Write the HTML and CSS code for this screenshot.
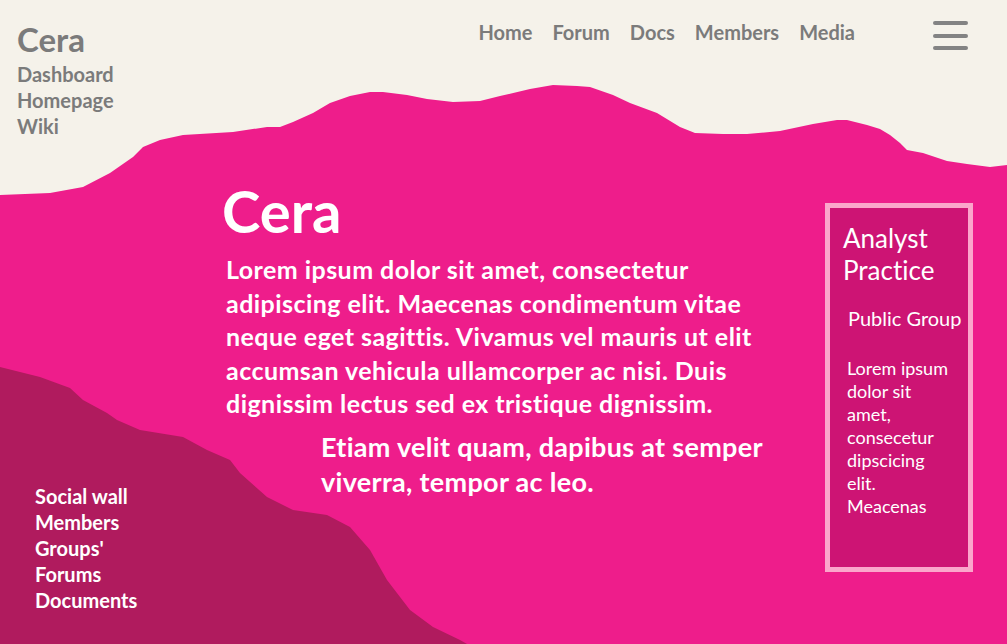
FILE: index.html
```html
<!DOCTYPE html>
<html lang="en">
<head>
<meta charset="utf-8">
<title>Cera</title>
<link rel="stylesheet" href="styles.css">
</head>
<body>
<div class="page">
  <svg class="bg" viewBox="0 0 1007 644" preserveAspectRatio="none" aria-hidden="true">
    <path class="wave" d="M0,195 L50,193 L83,187 L110,173 L133,157 L143,147 L160,140 L183,135 L233,132 L267,127 L280,127 L293,122 L313,113 L330,103 L350,96 L370,92 L383,92 L407,95 L427,99 L453,102 L480,101 L500,96 L530,89 L553,85 L577,86 L590,87 L613,95 L630,103 L657,113 L680,127 L695,133 L723,134 L747,134 L780,131 L813,124 L837,120 L847,120 L867,125 L880,129 L890,135 L900,143 L907,150 L923,153 L947,161 L967,164 L990,167 L1007,165 L1007,644 L0,644 Z"/>
    <path class="hill" d="M0,367 L40,377 L70,388 L83,400 L107,413 L117,420 L140,430 L183,437 L207,450 L230,460 L240,473 L267,497 L293,510 L327,515 L350,527 L370,550 L387,580 L410,610 L433,627 L460,640 L467,644 L0,644 Z"/>
  </svg>

  <header class="header">
    <div class="brand">
      <div class="brand-name">Cera</div>
      <ul class="brand-links">
        <li>Dashboard</li>
        <li>Homepage</li>
        <li>Wiki</li>
      </ul>
    </div>
    <nav class="topnav">
      <a>Home</a>
      <a>Forum</a>
      <a>Docs</a>
      <a>Members</a>
      <a>Media</a>
    </nav>
    <div class="burger" aria-label="Menu">
      <span></span><span></span><span></span>
    </div>
  </header>

  <main class="main">
    <ul class="sidenav">
      <li>Social wall</li>
      <li>Members</li>
      <li>Groups'</li>
      <li>Forums</li>
      <li>Documents</li>
    </ul>

    <section class="content">
      <h1 class="title">Cera</h1>
      <p class="lead">Lorem ipsum dolor sit amet, consectetur adipiscing elit. Maecenas condimentum vitae neque eget sagittis. Vivamus vel mauris ut elit accumsan vehicula ullamcorper ac nisi. Duis dignissim lectus sed ex tristique dignissim.</p>
      <p class="sub">Etiam velit quam, dapibus at semper viverra, tempor ac leo.</p>
    </section>

    <aside class="card">
      <h2 class="card-title">Analyst Practice</h2>
      <p class="card-type">Public Group</p>
      <p class="card-text">Lorem ipsum dolor sit amet, consecetur dipscicing elit. Meacenas</p>
    </aside>
  </main>
</div>
</body>
</html>
```

FILE: styles.css
```css
* { box-sizing: border-box; }

html, body {
  margin: 0;
  padding: 0;
  background: #f5f2ea;
}

.page {
  position: relative;
  width: 1007px;
  height: 644px;
  overflow: hidden;
  font-family: Lato, "Open Sans", sans-serif;
  font-variant-ligatures: none;
  display: grid;
  grid-template-rows: 138px 1fr;
}

.bg {
  position: absolute;
  inset: 0;
  width: 100%;
  height: 100%;
  z-index: 0;
}

.wave { fill: #ee1d8b; }
.hill { fill: #b01b5e; }

.header {
  position: relative;
  z-index: 1;
  display: flex;
  align-items: flex-start;
  padding: 0 39px 0 17px;
}

.brand {
  padding-top: 17px;
  color: #7b7b7b;
}

.brand-name {
  font-size: 33px;
  font-weight: 700;
  line-height: 44px;
}

.brand-links {
  list-style: none;
  margin: 0;
  padding: 0;
  font-size: 20px;
  font-weight: 700;
  line-height: 26px;
}

.topnav {
  margin-left: auto;
  margin-right: 78px;
  display: flex;
  gap: 20px;
  padding-top: 19px;
  font-size: 20px;
  font-weight: 700;
  line-height: 26px;
  color: #7b7b7b;
}

.burger {
  margin-top: 21px;
  width: 35px;
  display: flex;
  flex-direction: column;
  gap: 8.5px;
}

.burger span {
  display: block;
  height: 4px;
  border-radius: 2px;
  background: #838383;
}

.main {
  position: relative;
  z-index: 1;
  display: grid;
  grid-template-columns: 224px 1fr 148px;
  padding-right: 34px;
}

.sidenav {
  align-self: end;
  list-style: none;
  margin: 0;
  padding: 0 0 31px 35px;
  color: #fff;
  font-size: 20px;
  font-weight: 700;
  line-height: 26px;
  white-space: nowrap;
}

.content {
  color: #fff;
  padding-top: 40px;
}

.title {
  margin: 0 0 0 -2px;
  font-size: 58px;
  font-weight: 700;
  line-height: 66px;
}

.lead {
  max-width: 548px;
  margin: 9px 0 0 2px;
  font-size: 25px;
  font-weight: 700;
  line-height: 33.5px;
  letter-spacing: 0.45px;
}

.sub {
  max-width: 470px;
  margin: 8px 0 0 97px;
  font-size: 27px;
  font-weight: 700;
  line-height: 35px;
  letter-spacing: 0.3px;
}

.card {
  align-self: start;
  margin-top: 65px;
  height: 369px;
  border: 5px solid #fba6cb;
  background: #cd1474;
  color: #fff;
  padding: 14px 3px 0 13px;
}

.card-title {
  margin: 0;
  font-size: 26px;
  font-weight: 400;
  line-height: 32px;
}

.card-type {
  margin: 20px 0 0 5px;
  font-size: 20px;
  line-height: 24px;
  white-space: nowrap;
}

.card-text {
  margin: 27px 9px 0 4px;
  font-size: 18px;
  line-height: 23px;
}
```
